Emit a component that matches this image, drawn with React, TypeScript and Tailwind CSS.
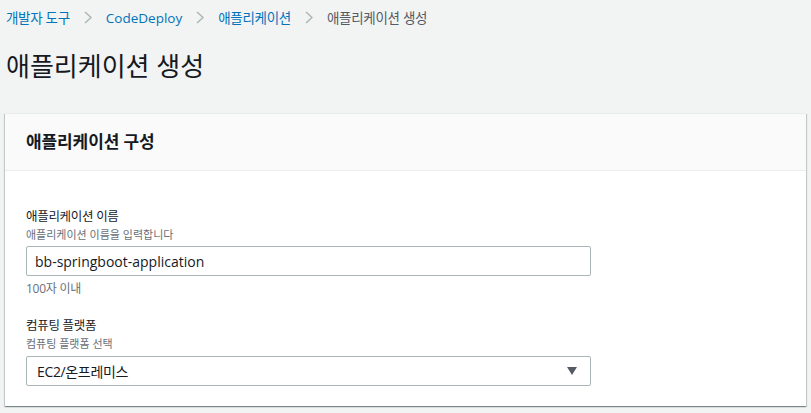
import React from "react";

const Chevron = () => (
  <svg width="8" height="13" viewBox="0 0 8 13" className="mx-[14px] shrink-0">
    <path d="M1 1 L7 6.5 L1 12" fill="none" stroke="#aab7b8" strokeWidth="1.5" />
  </svg>
);

export default function App() {
  return (
    <div
      className="min-h-[413px] bg-[#f2f3f3] text-[#16191f]"
      style={{ fontFamily: '"Open Sans", "Noto Sans CJK KR", sans-serif' }}
    >
      <nav className="flex items-center h-[35px] px-[6px] text-[13.5px] leading-[18px]">
        <span className="text-[#0073bb] tracking-[-0.3px]">개발자 도구</span>
        <Chevron />
        <span className="text-[#0073bb]">CodeDeploy</span>
        <Chevron />
        <span className="text-[#0073bb] tracking-[-0.3px]">애플리케이션</span>
        <Chevron />
        <span className="text-[#545b64] tracking-[-0.3px]">애플리케이션 생성</span>
      </nav>
      <h1 className="px-[6px] pt-[14px] text-[26px] leading-[34px] font-normal">
        애플리케이션 생성
      </h1>
      <section className="mx-[5px] mt-[30px] bg-white border-t border-[#eaeded] shadow-[0_1px_1px_0_rgba(0,28,36,0.3),1px_1px_1px_0_rgba(0,28,36,0.15),-1px_1px_1px_0_rgba(0,28,36,0.15)]">
        <div className="h-[57px] flex items-center px-[21px] bg-[#fafafa] border-b border-[#eaeded]">
          <h2 className="text-[17px] font-bold tracking-[-0.1px]">애플리케이션 구성</h2>
        </div>
        <div className="px-[21px] pt-[36px] pb-[20px]">
          <div className="text-[12.5px] leading-[20px] tracking-[-0.3px]">애플리케이션 이름</div>
          <div className="text-[11px] leading-[16px] text-[#687078]">
            애플리케이션 이름을 입력합니다
          </div>
          <div className="mt-[3px] w-[565px] h-[30px] border border-[#aab7b8] rounded-[2px] bg-white flex items-center pl-[8px] text-[14px]">
            bb-springboot-application
          </div>
          <div className="mt-[5px] text-[12px] leading-[16px] text-[#687078] tracking-[-0.25px]">100자 이내</div>

          <div className="mt-[19px] text-[12.5px] leading-[20px] tracking-[-0.3px]">컴퓨팅 플랫폼</div>
          <div className="text-[11px] leading-[16px] text-[#687078]">컴퓨팅 플랫폼 선택</div>
          <div className="mt-[4px] w-[565px] h-[30px] border border-[#aab7b8] rounded-[2px] bg-white flex items-center justify-between pl-[10px] pr-[13px] text-[14px] tracking-[-0.35px]">
            <span>EC2/온프레미스</span>
            <svg width="10" height="8" viewBox="0 0 10 8">
              <path d="M0 0 H10 L5 8 Z" fill="#545b64" />
            </svg>
          </div>
        </div>
      </section>
    </div>
  );
}
